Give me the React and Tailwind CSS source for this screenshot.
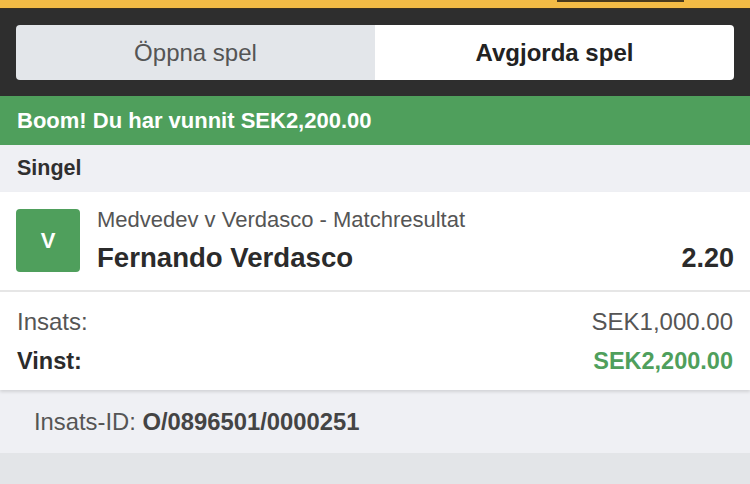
import React from "react";

export default function App() {
  return (
    <div className="w-[750px] h-[484px] overflow-hidden bg-[#e3e5e8] text-[#333] font-['Liberation_Sans',Arial,Helvetica,sans-serif]">
      {/* yellow header strip */}
      <div className="h-[9px] bg-[#f3bb45] relative border-b border-[#3b3020]">
        <div className="absolute left-[557px] top-0 w-[127px] h-[2px] bg-[#4a3a1c]" />
      </div>
      {/* tabs */}
      <div className="bg-[#2e2e2e] px-4 pt-[16px] pb-[16px]">
        <div className="flex h-[55px] rounded-[4px] overflow-hidden">
          <div className="flex-1 bg-[#e3e6ea] flex items-center justify-center text-[24px] text-[#555]">Öppna spel</div>
          <div className="flex-1 bg-white flex items-center justify-center text-[24px] font-bold text-[#222]">Avgjorda spel</div>
        </div>
      </div>
      {/* banner */}
      <div className="h-[49px] bg-[#4f9f5c] flex items-center px-[17px] text-white font-bold text-[22px]">
        Boom! Du har vunnit SEK2,200.00
      </div>
      {/* section header */}
      <div className="h-[47px] bg-[#eff0f4] flex items-center px-[17px] font-bold text-[21.5px] text-[#2f2f2f]">
        Singel
      </div>
      {/* card */}
      <div className="bg-white shadow-[0_2px_3px_rgba(0,0,0,0.12)] relative">
        <div className="flex items-start px-4 pt-[17px] h-[100px] border-b-2 border-[#e6e6e6]">
          <div className="w-[64px] h-[63px] rounded-[4px] bg-[#4f9f5c] text-white font-bold text-[22px] flex items-center justify-center shrink-0">V</div>
          <div className="flex-1 ml-[17px]">
            <div className="text-[22px] leading-[26px] text-[#555] -mt-[2px]">Medvedev v Verdasco - Matchresultat</div>
            <div className="flex justify-between items-center mt-[9px]">
              <div className="text-[27.6px] leading-[32px] font-bold text-[#2b2b2b]">Fernando Verdasco</div>
              <div className="text-[27px] leading-[32px] font-bold text-[#2b2b2b]">2.20</div>
            </div>
          </div>
        </div>
        <div className="px-[17px] pt-[15px] pb-[13px]">
          <div className="flex justify-between items-center h-[30px] text-[24px] text-[#555]">
            <span>Insats:</span>
            <span>SEK1,000.00</span>
          </div>
          <div className="flex justify-between items-center h-[30px] mt-[10px] text-[23.5px] font-bold">
            <span className="text-[#2b2b2b]">Vinst:</span>
            <span className="text-[#4f9f5c]">SEK2,200.00</span>
          </div>
        </div>
      </div>
      {/* footer */}
      <div className="h-[63px] bg-[#eff0f4] flex items-center px-[34px] text-[23.8px] text-[#555]">
        <span>Insats-ID:&nbsp;</span>
        <span className="font-bold text-[#444]">O/0896501/0000251</span>
      </div>
    </div>
  );
}
